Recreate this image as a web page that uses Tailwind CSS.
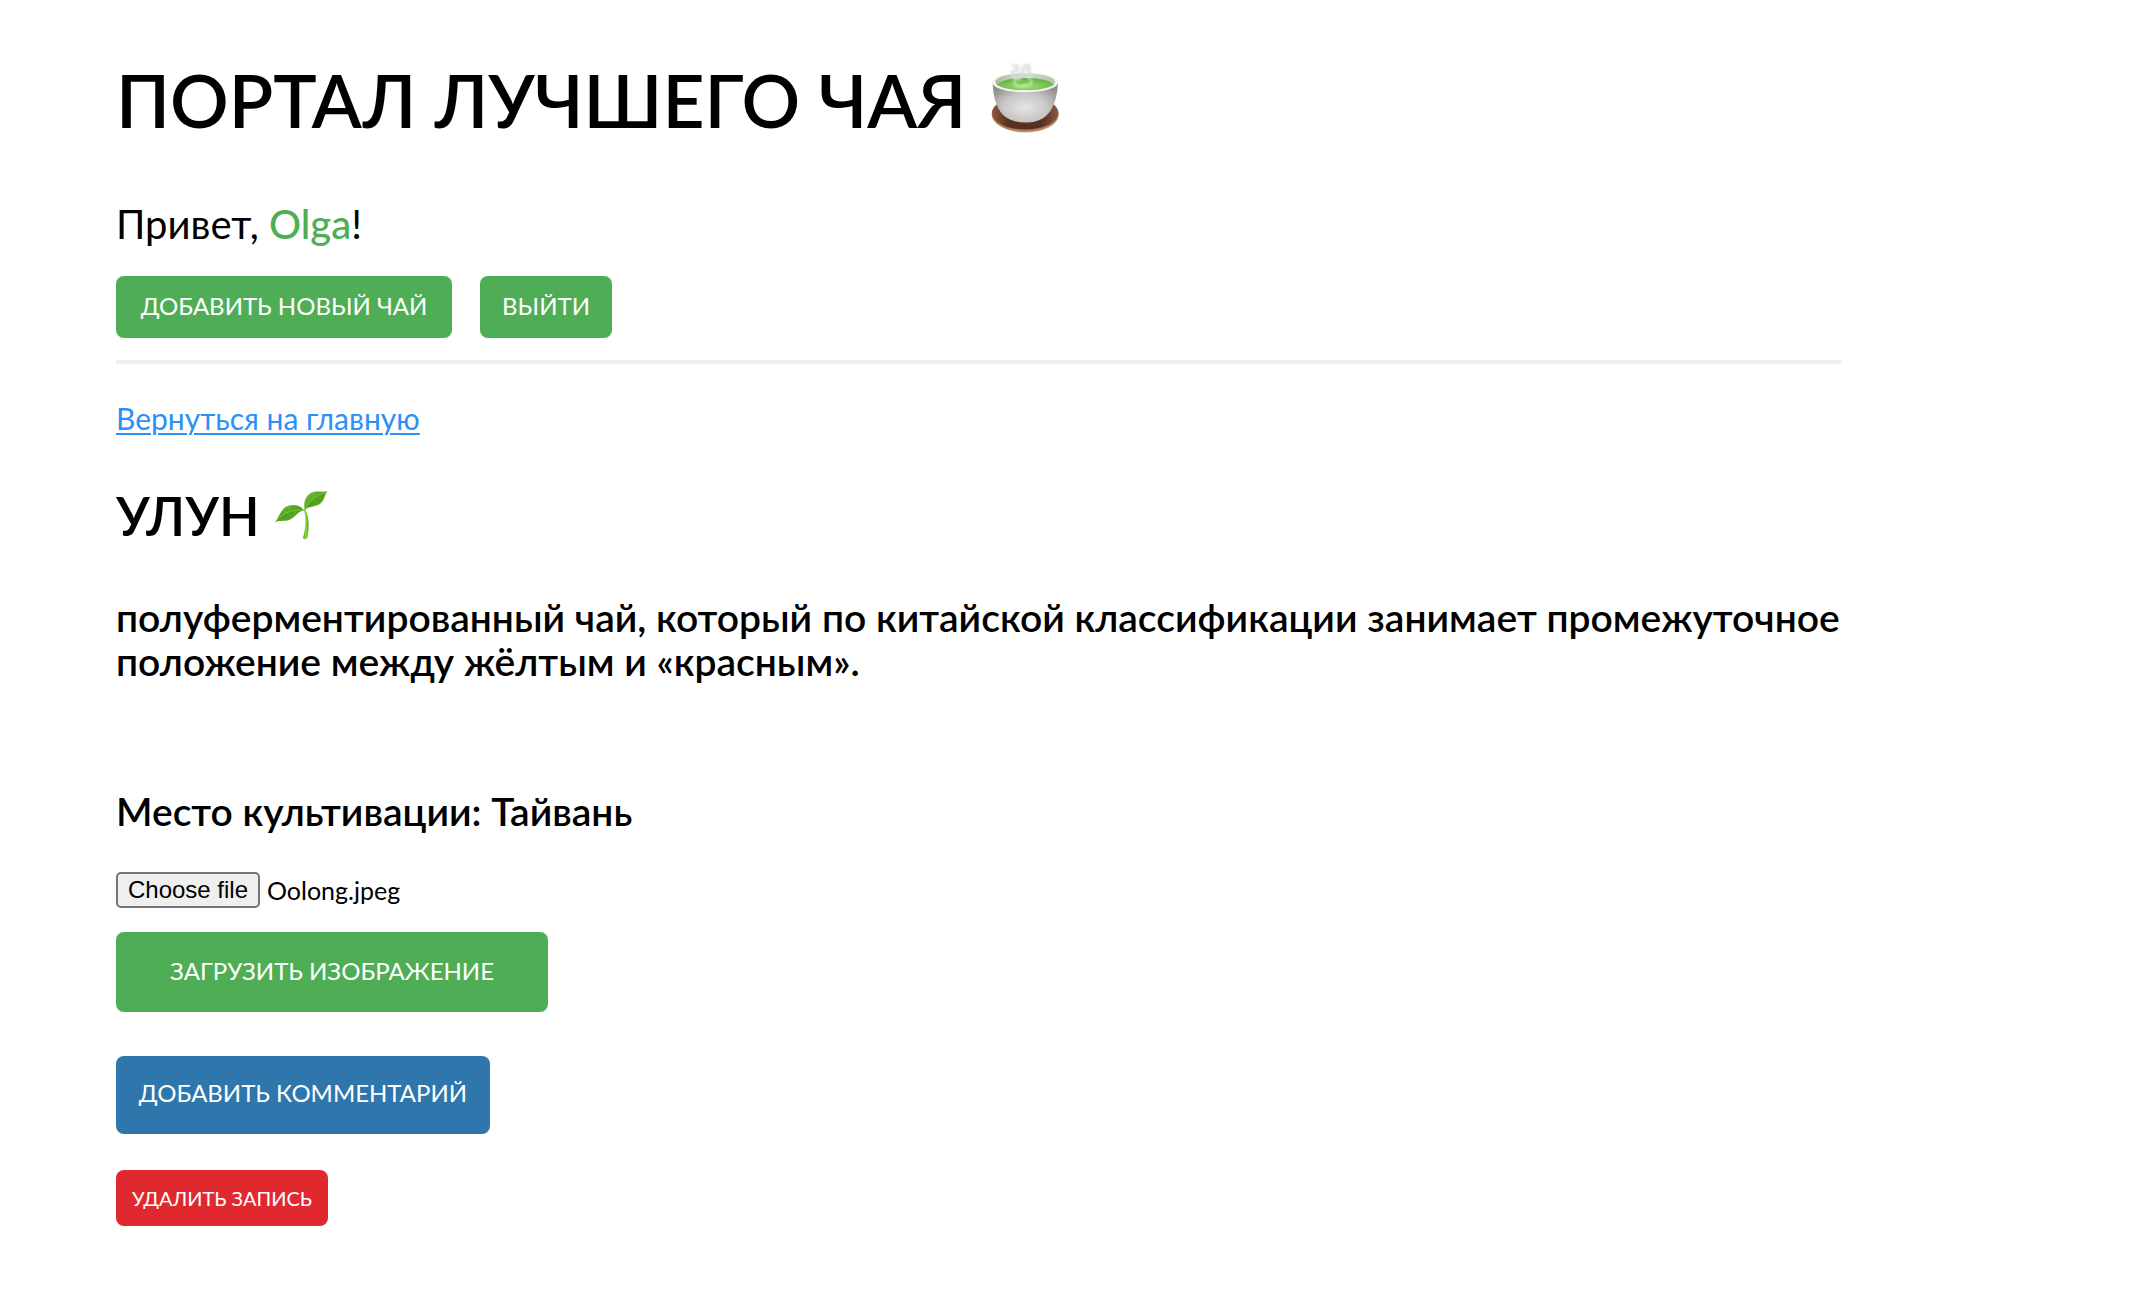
<!DOCTYPE html>
<html lang="ru">
<head>
<meta charset="utf-8">
<meta name="viewport" content="width=device-width, initial-scale=1">
<title>Портал лучшего чая</title>
<script src="https://cdn.jsdelivr.net/npm/@tailwindcss/browser@4"></script>
</head>
<body class="bg-white font-['Lato','Noto_Sans',sans-serif] text-black">
<div class="max-w-[1841px] pl-[116px] pt-14 pb-16">
  <header class="border-b-4 border-[#efefef] pb-[22px]">
    <h1 class="flex items-center gap-6 text-[73px] leading-[88px] font-semibold">
      ПОРТАЛ ЛУЧШЕГО ЧАЯ
      <svg class="mb-2 h-[75px] w-[71px]" viewBox="60 25 214 225" role="img" aria-label="Чашка чая">
        <defs>
          <radialGradient id="cup" cx="0.5" cy="0.62" r="0.62"><stop offset="0" stop-color="#e6e4e2"/><stop offset="0.55" stop-color="#c9c7c5"/><stop offset="1" stop-color="#92908e"/></radialGradient>
          <linearGradient id="inside" x1="0" y1="0" x2="1" y2="0"><stop offset="0" stop-color="#a9bea0"/><stop offset="0.5" stop-color="#cfdcc9"/><stop offset="1" stop-color="#b3c5ab"/></linearGradient>
          <radialGradient id="tea" cx="0.5" cy="0.7" r="0.6"><stop offset="0" stop-color="#9add70"/><stop offset="1" stop-color="#68b446"/></radialGradient>
          <linearGradient id="saucer" x1="0" y1="0" x2="1" y2="0"><stop offset="0" stop-color="#8b5a45"/><stop offset="0.25" stop-color="#57301f"/><stop offset="0.75" stop-color="#57301f"/><stop offset="1" stop-color="#8b5a45"/></linearGradient>
          <filter id="steam" x="-20%" y="-20%" width="140%" height="140%"><feGaussianBlur stdDeviation="3"/></filter>
        </defs>
        <ellipse cx="168" cy="196" rx="98" ry="51" fill="#000" opacity="0.2"/>
        <ellipse cx="166" cy="191" rx="101" ry="53" fill="#b27c50"/>
        <ellipse cx="166" cy="187" rx="100" ry="50" fill="url(#saucer)"/>
        <path d="M68 96C70 150 84 183 108 200C126 212 146 216 167 216C190 216 209 211 225 199C248 182 262 149 265 96Z" fill="url(#cup)"/>
        <ellipse cx="166" cy="95" rx="99" ry="30" fill="#f3f2f1"/>
        <ellipse cx="166" cy="93" rx="90" ry="25" fill="url(#inside)"/>
        <path d="M80 101C98 87 130 82 167 82C204 82 236 87 253 101C238 113 207 118 167 118C127 118 96 113 80 101Z" fill="url(#tea)"/>
        <g fill="none" stroke-linecap="round" filter="url(#steam)">
          <path d="M138 104C128 94 136 84 150 82M182 84C190 96 182 106 160 106C150 106 142 108 138 104" stroke="#fff" stroke-width="6" opacity="0.55"/>
          <path d="M136 84C120 66 128 58 140 60C150 50 142 44 130 44M150 84C140 70 164 66 158 54M164 46C180 40 184 52 172 58C184 64 182 74 176 80" stroke="#dadcda" stroke-width="10" opacity="0.8"/>
        </g>
      </svg>
    </h1>
    <p class="mt-14 text-[40px] leading-[48px]">Привет, <span class="font-medium text-[#4fae55]">Olga</span>!</p>
    <nav class="mt-7 flex gap-7">
      <button type="button" class="h-[62px] w-[336px] rounded-lg bg-[#4fae55] pb-0.5 text-2xl text-white">ДОБАВИТЬ НОВЫЙ ЧАЙ</button>
      <button type="button" class="h-[62px] w-[132px] rounded-lg bg-[#4fae55] pb-0.5 text-2xl text-white">ВЫЙТИ</button>
    </nav>
  </header>
  <main class="flex flex-col items-start">
    <a href="#" class="mt-[34px] text-[30px] leading-10 text-[#2b90f8] underline decoration-2 underline-offset-[3px]">Вернуться на главную</a>
    <h2 class="mt-[46px] flex items-center gap-[14px] text-[53px] leading-[64px] font-semibold">
      УЛУН
      <svg class="mb-1 h-[51px] w-[54px]" viewBox="36 30 162 153" role="img" aria-label="Росток">
        <defs>
          <linearGradient id="leaf" x1="0" y1="0" x2="1" y2="1"><stop offset="0" stop-color="#7fc63a"/><stop offset="0.5" stop-color="#4f9f1b"/><stop offset="1" stop-color="#66bd20"/></linearGradient>
          <linearGradient id="stem" x1="0" y1="0" x2="1" y2="0"><stop offset="0" stop-color="#4d9b16"/><stop offset="0.5" stop-color="#8fdc3c"/><stop offset="1" stop-color="#4f9f18"/></linearGradient>
        </defs>
        <path d="M126 92C132 116 132 146 123 177C126 182 134 181 136 177C142 144 142 116 130 91Z" fill="url(#stem)"/>
        <path d="M127 95C116 78 94 74 75 82C56 91 52 112 39 130C53 122 75 131 91 118C105 107 112 94 127 95Z" fill="url(#leaf)"/>
        <path d="M128 94C125 70 128 54 146 42C162 34 180 40 196 37C187 50 188 64 174 75C158 86 138 80 128 94Z" fill="url(#leaf)"/>
        <path d="M45 124C66 100 90 90 125 94M130 88C142 64 162 48 191 40" fill="none" stroke="#8fce4a" stroke-width="2"/>
        <path d="M64 106L66 92M78 98L83 84M72 101L86 109M90 94L102 101M141 70L139 55M153 59L154 45M148 64L164 69M162 53L179 57" fill="none" stroke="#8fce4a" stroke-width="1" opacity="0.7"/>
      </svg>
    </h2>
    <h3 class="mt-[47px] text-[39px] leading-[44px] font-semibold">полуферментированный чай, который по китайской классификации занимает промежуточное положение между жёлтым и «красным».</h3>
    <h3 class="mt-[106px] text-[39px] leading-[44px] font-semibold">Место культивации: Тайвань</h3>
    <form class="mt-[39px] flex flex-col items-start gap-6">
      <div class="flex h-9 items-center gap-[7px]">
        <input id="photo" type="file" accept="image/*" class="peer sr-only">
        <label for="photo" class="flex h-9 w-36 items-center justify-center rounded-[5px] border-2 border-[#767676] bg-[#efefef] font-['Liberation_Sans',sans-serif] text-2xl leading-8 peer-focus-visible:outline-2">Choose file</label>
        <output for="photo" class="text-[25px] leading-8">Oolong.jpeg</output>
      </div>
      <button type="button" class="h-20 w-[432px] rounded-lg bg-[#4fae55] pb-0.5 text-2xl text-white">ЗАГРУЗИТЬ ИЗОБРАЖЕНИЕ</button>
    </form>
    <button type="button" class="mt-11 h-[78px] w-[374px] rounded-lg bg-[#2e76ab] pb-1 text-2xl text-white">ДОБАВИТЬ КОММЕНТАРИЙ</button>
    <button type="button" class="mt-9 h-14 w-[212px] rounded-lg bg-[#e0292f] text-xl text-white">УДАЛИТЬ ЗАПИСЬ</button>
  </main>
</div>
</body>
</html>
